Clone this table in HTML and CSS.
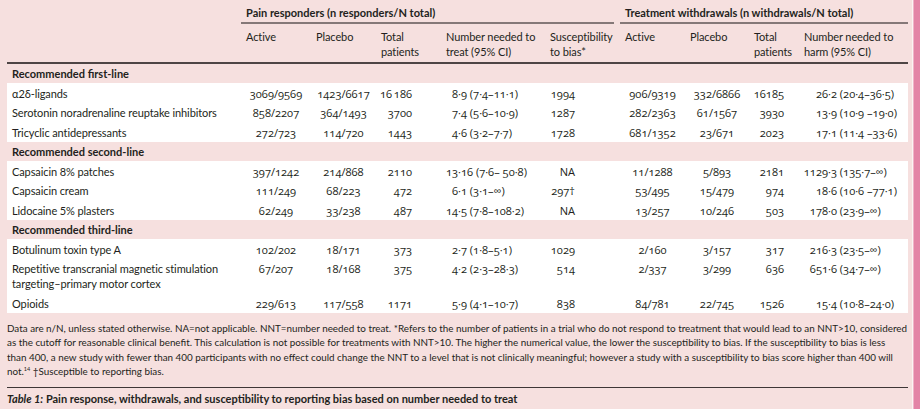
FILE: index.html
```html
<!DOCTYPE html>
<html lang="en">
<head>
<meta charset="utf-8">
<title>Table 1</title>
<link rel="stylesheet" href="styles.css">
</head>
<body>
<div class="page">
  <div class="content">
    <table class="data">
      <colgroup>
        <col class="c-label"><col class="c-a"><col class="c-p"><col class="c-t"><col class="c-nnt"><col class="c-s">
        <col class="c-wa"><col class="c-wp"><col class="c-wt"><col class="c-nnh">
      </colgroup>
      <thead>
        <tr class="group">
          <th></th>
          <th colspan="5" class="grp grp-pain"><div class="grp-rule">Pain responders (n responders/N total)</div></th>
          <th colspan="4" class="grp"><div class="grp-rule">Treatment withdrawals (n withdrawals/N total)</div></th>
        </tr>
        <tr class="sub">
          <th></th>
          <th>Active</th>
          <th>Placebo</th>
          <th>Total<br>patients</th>
          <th>Number needed to<br>treat (95% CI)</th>
          <th>Susceptibility<br>to bias*</th>
          <th>Active</th>
          <th>Placebo</th>
          <th>Total<br>patients</th>
          <th>Number needed to<br>harm (95% CI)</th>
        </tr>
      </thead>
      <tbody>
        <tr class="section"><td colspan="10">Recommended first-line</td></tr>
        <tr>
          <td class="lbl">α2δ-ligands</td>
          <td class="num ctr">3069/9569</td><td class="num ctr">1423/6617</td><td class="num tot">16&#8201;186</td>
          <td class="num ci"><span class="int">8</span>·9 (7·4–11·1)</td><td class="num sus">1994</td>
          <td class="num ctr">906/9319</td><td class="num ctr">332/6866</td><td class="num wtot">16185</td>
          <td class="num ci2"><span class="int2">26</span>·2 (20·4–36·5)</td>
        </tr>
        <tr>
          <td class="lbl">Serotonin noradrenaline reuptake inhibitors</td>
          <td class="num ctr">858/2207</td><td class="num ctr">364/1493</td><td class="num tot">3700</td>
          <td class="num ci"><span class="int">7</span>·4 (5·6–10·9)</td><td class="num sus">1287</td>
          <td class="num ctr">282/2363</td><td class="num ctr">61/1567</td><td class="num wtot">3930</td>
          <td class="num ci2"><span class="int2">13</span>·9 (10·9 –19·0)</td>
        </tr>
        <tr>
          <td class="lbl">Tricyclic antidepressants</td>
          <td class="num ctr">272/723</td><td class="num ctr">114/720</td><td class="num tot">1443</td>
          <td class="num ci"><span class="int">4</span>·6 (3·2–7·7)</td><td class="num sus">1728</td>
          <td class="num ctr">681/1352</td><td class="num ctr">23/671</td><td class="num wtot">2023</td>
          <td class="num ci2"><span class="int2">17</span>·1 (11·4 –33·6)</td>
        </tr>
        <tr class="section"><td colspan="10">Recommended second-line</td></tr>
        <tr>
          <td class="lbl">Capsaicin 8% patches</td>
          <td class="num ctr">397/1242</td><td class="num ctr">214/868</td><td class="num tot">2110</td>
          <td class="num ci"><span class="int">13</span>·16 (7·6– 50·8)</td><td class="num sus">NA</td>
          <td class="num ctr">11/1288</td><td class="num ctr">5/893</td><td class="num wtot">2181</td>
          <td class="num ci2"><span class="int2">1129</span>·3 (135·7–∞)</td>
        </tr>
        <tr>
          <td class="lbl">Capsaicin cream</td>
          <td class="num ctr">111/249</td><td class="num ctr">68/223</td><td class="num tot">472</td>
          <td class="num ci"><span class="int">6</span>·1 (3·1–∞)</td><td class="num sus">297†</td>
          <td class="num ctr">53/495</td><td class="num ctr">15/479</td><td class="num wtot">974</td>
          <td class="num ci2"><span class="int2">18</span>·6 (10·6 –77·1)</td>
        </tr>
        <tr>
          <td class="lbl">Lidocaine 5% plasters</td>
          <td class="num ctr">62/249</td><td class="num ctr">33/238</td><td class="num tot">487</td>
          <td class="num ci"><span class="int">14</span>·5 (7·8–108·2)</td><td class="num sus">NA</td>
          <td class="num ctr">13/257</td><td class="num ctr">10/246</td><td class="num wtot">503</td>
          <td class="num ci2"><span class="int2">178</span>·0 (23·9–∞)</td>
        </tr>
        <tr class="section"><td colspan="10">Recommended third-line</td></tr>
        <tr>
          <td class="lbl">Botulinum toxin type A</td>
          <td class="num ctr">102/202</td><td class="num ctr">18/171</td><td class="num tot">373</td>
          <td class="num ci"><span class="int">2</span>·7 (1·8–5·1)</td><td class="num sus">1029</td>
          <td class="num ctr">2/160</td><td class="num ctr">3/157</td><td class="num wtot">317</td>
          <td class="num ci2"><span class="int2">216</span>·3 (23·5–∞)</td>
        </tr>
        <tr>
          <td class="lbl">Repetitive transcranial magnetic stimulation<br>targeting–primary motor cortex</td>
          <td class="num ctr">67/207</td><td class="num ctr">18/168</td><td class="num tot">375</td>
          <td class="num ci"><span class="int">4</span>·2 (2·3–28·3)</td><td class="num sus">514</td>
          <td class="num ctr">2/337</td><td class="num ctr">3/299</td><td class="num wtot">636</td>
          <td class="num ci2"><span class="int2">651</span>·6 (34·7–∞)</td>
        </tr>
        <tr>
          <td class="lbl">Opioids</td>
          <td class="num ctr">229/613</td><td class="num ctr">117/558</td><td class="num tot">1171</td>
          <td class="num ci"><span class="int">5</span>·9 (4·1–10·7)</td><td class="num sus">838</td>
          <td class="num ctr">84/781</td><td class="num ctr">22/745</td><td class="num wtot">1526</td>
          <td class="num ci2"><span class="int2">15</span>·4 (10·8–24·0)</td>
        </tr>
      </tbody>
    </table>
    <p class="notes">Data are n/N, unless stated otherwise. NA=not applicable. NNT=number needed to treat. *Refers to the number of patients in a trial who do not respond to treatment that would lead to an NNT&gt;10, considered<br>as the cutoff for reasonable clinical benefit. This calculation is not possible for treatments with NNT&gt;10. The higher the numerical value, the lower the susceptibility to bias. If the susceptibility to bias is less<br>than 400, a new study with fewer than 400 participants with no effect could change the NNT to a level that is not clinically meaningful; however a study with a susceptibility to bias score higher than 400 will<br>not.<sup>14</sup> †Susceptible to reporting bias.</p>
    <p class="caption"><em>Table 1:</em> Pain response, withdrawals, and susceptibility to reporting bias based on number needed to treat</p>
  </div>
  <div class="edge"></div>
</div>
</body>
</html>
```
FILE: styles.css
```css
html, body {
  margin: 0;
  padding: 0;
}
body {
  background: #f6e0df;
  color: #231f20;
  font-family: Lato, "Open Sans", sans-serif;
  font-size: 11px;
  letter-spacing: -0.1px;
  line-height: 15px;
}
.page {
  display: flex;
  width: 920px;
  height: 409px;
  overflow: hidden;
}
.content {
  width: 901px;
  padding-left: 7px;
  padding-right: 4px;
}
.edge {
  flex: 1;
  border-left: 1px solid #fbf3f3;
  background: #e384a6;
  box-shadow: inset 1px 0 0 #f0b4c8;
}
.data {
  width: 901px;
  table-layout: fixed;
  border-collapse: collapse;
}
.c-label { width: 234px; }
.c-a { width: 70px; }
.c-p { width: 65px; }
.c-t { width: 65px; }
.c-nnt { width: 104px; }
.c-s { width: 75px; }
.c-wa { width: 65px; }
.c-wp { width: 64px; }
.c-wt { width: 50px; }
.c-nnh { width: 109px; }

th, td {
  padding: 0;
  white-space: nowrap;
  text-align: left;
  font-weight: normal;
  vertical-align: top;
}
.group th {
  padding-top: 5px;
}
.grp {
  font-weight: 700;
  letter-spacing: 0;
}
.grp-pain {
  padding-right: 6px;
}
.grp-rule {
  padding: 0 0 2px 5px;
  border-bottom: 2px solid #857878;
}
.sub th {
  padding: 5px 0 2.5px 5px;
  border-bottom: 2px solid #4e4545;
}
tbody td {
  padding: 2.5px 0 2px 0;
}
tbody tr:not(.section) {
  background: #ffffff;
}
.section td {
  font-weight: 700;
  letter-spacing: 0;
  padding-left: 5px;
}
tbody td.lbl {
  padding-left: 5px;
}
.num {
  font-family: "Open Sans", Lato, sans-serif;
  font-size: 11.1px;
  letter-spacing: 0;
  font-variant-numeric: oldstyle-nums;
}
.ctr {
  text-align: center;
}
tbody td.tot {
  text-align: right;
  padding-right: 29px;
}
tbody td.sus {
  text-align: right;
  padding-right: 45px;
}
tbody td.wtot {
  text-align: right;
  padding-right: 15px;
}
tbody td.ci {
  padding-left: 4px;
}
tbody td.ci2 {
  padding-left: 3px;
}
.int {
  display: inline-block;
  width: 13px;
  text-align: right;
}
.int2 {
  display: inline-block;
  width: 26px;
  text-align: right;
}
.notes {
  margin: 8px 0 0 0;
  font-size: 9.85px;
  letter-spacing: 0;
  line-height: 14.5px;
  white-space: nowrap;
  border-bottom: 1.5px solid #3e3636;
  padding-bottom: 8px;
}
.notes sup {
  font-size: 5.5px;
  line-height: 0;
  vertical-align: 4px;
}
.caption {
  margin: 0;
  padding-top: 3.5px;
  font-weight: 700;
  letter-spacing: 0;
  font-size: 11px;
  line-height: 15px;
}
.caption em {
  font-style: italic;
}
```
